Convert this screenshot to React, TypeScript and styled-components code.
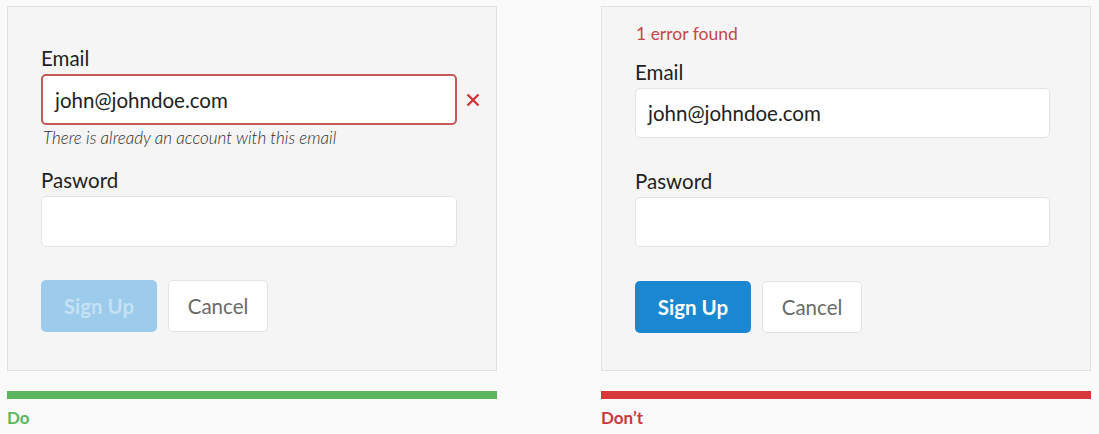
import React from "react";
import styled, { createGlobalStyle } from "styled-components";

const Global = createGlobalStyle`
  html, body { margin: 0; padding: 0; background: #fafafa; }
  body { font-family: Lato, "Open Sans", sans-serif; color: #222; }
  * { box-sizing: border-box; }
`;

const Page = styled.div`
  display: flex;
  gap: 104px;
  padding: 6px 8px 0 7px;
  width: 1099px;
  height: 434px;
`;

const Column = styled.div`
  width: 490px;
  display: flex;
  flex-direction: column;
`;

const Panel = styled.form<{ $pt: number }>`
  height: 365px;
  background: #f5f5f5;
  border: 1px solid #e1e1e1;
  padding: ${(p) => p.$pt}px 0 0 33px;
  display: flex;
  flex-direction: column;
`;

const ErrorSummary = styled.div`
  font-size: 17.5px;
  line-height: 21px;
  color: #c8454a;
  margin-left: 1px;
`;

const Field = styled.div<{ $mt: number }>`
  display: flex;
  flex-direction: column;
  margin-top: ${(p) => p.$mt}px;
`;

const Label = styled.label`
  font-size: 20.5px;
  line-height: 24px;
  color: #1f1f1f;
  margin-bottom: 4px;
`;

const InputRow = styled.div`
  display: flex;
  align-items: center;
  gap: 9px;
`;

const Input = styled.div<{ $error?: boolean; $compact?: boolean }>`
  width: ${(p) => (p.$compact ? 415 : 416)}px;
  height: ${(p) => (p.$compact ? 50 : 51)}px;
  background: #fff;
  border: ${(p) => (p.$error ? "2px solid #c65858" : "1px solid #e3e3e3")};
  border-radius: 5px;
  padding-left: ${(p) => (p.$error ? 12 : 12)}px;
  display: flex;
  align-items: center;
  font-size: 20.5px;
  color: #222;
`;

const Helper = styled.div`
  font-size: 17px;
  line-height: 20px;
  font-style: italic;
  font-weight: 300;
  color: #2e2e2e;
  margin: 3px 0 0 2px;
`;

const Buttons = styled.div<{ $mt: number }>`
  display: flex;
  gap: 11px;
  margin-top: ${(p) => p.$mt}px;
`;

const Primary = styled.button<{ $disabled?: boolean }>`
  width: 116px;
  height: 52px;
  border: none;
  border-radius: 5px;
  font-family: Lato, sans-serif;
  font-weight: 700;
  font-size: 20.5px;
  background: ${(p) => (p.$disabled ? "#9dcbeb" : "#1a87d0")};
  color: ${(p) => (p.$disabled ? "#c4e1f5" : "#fff")};
  padding: 0;
`;

const Secondary = styled.button`
  width: 100px;
  height: 52px;
  background: #fff;
  border: 1px solid #e2e2e2;
  border-radius: 5px;
  font-family: Lato, sans-serif;
  font-size: 20.5px;
  color: #6a6a6a;
  padding: 0;
`;

const Bar = styled.div<{ $color: string }>`
  height: 8px;
  margin-top: 20px;
  background: ${(p) => p.$color};
`;

const Verdict = styled.div<{ $color: string }>`
  font-size: 17px;
  line-height: 20px;
  font-weight: 700;
  color: ${(p) => p.$color};
  margin-top: 9px;
`;

const ErrorIcon = () => (
  <svg width="14" height="14" viewBox="0 0 14 14">
    <path d="M1.5 1.5 L12.5 12.5 M12.5 1.5 L1.5 12.5" stroke="#d5333a" strokeWidth="2.4" strokeLinecap="butt" />
  </svg>
);

export default function App() {
  return (
    <>
      <Global />
      <Page>
        <Column>
          <Panel $pt={39}>
            <Field $mt={0}>
              <Label>Email</Label>
              <InputRow>
                <Input $error>john@johndoe.com</Input>
                <ErrorIcon />
              </InputRow>
              <Helper>There is already an account with this email</Helper>
            </Field>
            <Field $mt={20}>
              <Label>Pasword</Label>
              <Input />
            </Field>
            <Buttons $mt={33}>
              <Primary type="button" $disabled>Sign Up</Primary>
              <Secondary type="button">Cancel</Secondary>
            </Buttons>
          </Panel>
          <Bar $color="#5cb65c" />
          <Verdict $color="#5cb65c">Do</Verdict>
        </Column>
        <Column>
          <Panel $pt={16}>
            <ErrorSummary>1 error found</ErrorSummary>
            <Field $mt={16}>
              <Label>Email</Label>
              <Input $compact>john@johndoe.com</Input>
            </Field>
            <Field $mt={31}>
              <Label>Pasword</Label>
              <Input $compact />
            </Field>
            <Buttons $mt={34}>
              <Primary type="button">Sign Up</Primary>
              <Secondary type="button">Cancel</Secondary>
            </Buttons>
          </Panel>
          <Bar $color="#d7393a" />
          <Verdict $color="#c9383d">Don’t</Verdict>
        </Column>
      </Page>
    </>
  );
}
